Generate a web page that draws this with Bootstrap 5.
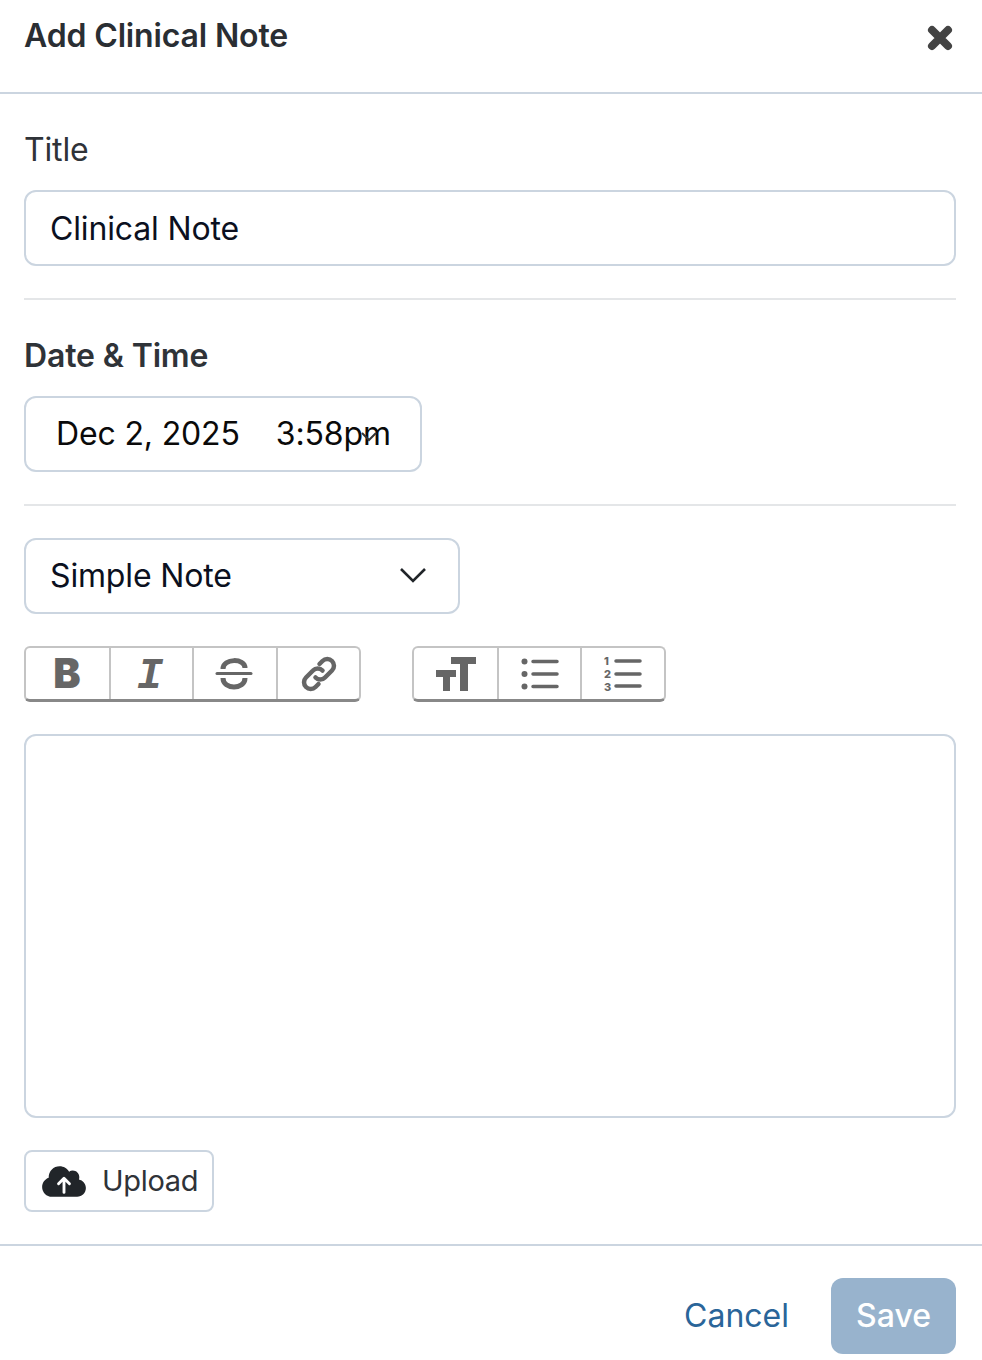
<!DOCTYPE html>
<html lang="en">
<head>
    <meta charset="UTF-8">
    <meta name="viewport" content="width=device-width, initial-scale=1.0">
    <title>Add Clinical Note</title>
    <link href="https://cdn.jsdelivr.net/npm/bootstrap@5.3.0/dist/css/bootstrap.min.css" rel="stylesheet">
    <style>
        body {
            background-color: #fff;
            font-family: 'Inter', 'Liberation Sans', sans-serif;
            font-size: 32px;
            letter-spacing: -0.15px;
            color: #212529;
        }
        .note-header {
            height: 94px;
            padding: 12px 24px 0;
            border-bottom: 2px solid #cbd5e0;
        }
        .note-heading {
            font-size: 32px;
            font-weight: 600;
            line-height: 48px;
            margin: 0;
            color: #2a2e33;
        }
        .note-close {
            background: none;
            border: 0;
            padding: 0;
            width: 32px;
            height: 32px;
            margin-top: 10px;
            margin-right: 2px;
            line-height: 0;
        }
        .note-body {
            padding: 32px 26px 32px 24px;
        }
        .note-label {
            display: block;
            line-height: 48px;
            margin-bottom: 16px;
            color: #2f3338;
        }
        .note-label-strong {
            font-weight: 600;
        }
        .note-field.form-control,
        .note-field.form-select {
            height: 76px;
            font-size: 32px;
            letter-spacing: -0.15px;
            line-height: 44px;
            padding: 14px 24px;
            border: 2px solid #cbd5e0;
            border-radius: 12px;
            color: #0b1020;
            box-shadow: none;
        }
        .note-rule {
            margin: 32px 0;
            border: 0;
            border-top: 2px solid #e4e6e8;
            opacity: 1;
        }
        .note-date {
            position: relative;
            width: 398px;
            white-space: nowrap;
            padding-left: 30px !important;
            color: #0a0a0a !important;
        }
        .note-date-gap {
            margin-left: 36px;
        }
        .note-date-caret {
            position: absolute;
            right: 42px;
            top: 33px;
        }
        .note-select.form-select {
            width: 436px;
            background-image: none;
        }
        .note-select-wrap {
            position: relative;
            width: 436px;
            margin-bottom: 32px;
        }
        .note-select-caret {
            position: absolute;
            right: 33px;
            top: 29px;
            pointer-events: none;
        }
        .note-toolbar {
            gap: 51px;
            margin-bottom: 32px;
        }
        .note-tools {
            display: flex;
            height: 56px;
            border: 2px solid #c4c4c4;
            border-bottom: 3px solid #888;
            border-radius: 6px;
        }
        .note-tool {
            background: transparent;
            border: 0;
            border-right: 2px solid #c4c4c4;
            padding: 0;
            display: flex;
            align-items: center;
            justify-content: center;
            height: 51px;
        }
        .note-tool:last-child {
            border-right: 0;
        }
        .note-tool-b { width: 85px; }
        .note-tool-i { width: 83px; }
        .note-tool-s { width: 84px; }
        .note-tool-n { width: 82px; }
        .note-tool-l { width: 81px; }
        .note-tools svg {
            overflow: visible;
            flex-shrink: 0;
        }
        .note-tools svg text {
            fill: #666;
        }
        .note-editor {
            height: 384px;
            border: 2px solid #cbd5e0;
            border-radius: 12px;
            margin-bottom: 32px;
        }
        .note-upload {
            height: 62px;
            width: 190px;
            border: 2px solid #cbd5e0;
            border-radius: 8px;
            background: #fff;
            font-size: 29px;
            letter-spacing: -0.3px;
            color: #2f3338;
            padding: 0 16px;
            gap: 16px;
        }
        .note-upload svg {
            flex-shrink: 0;
        }
        .note-footer {
            border-top: 2px solid #cbd5e0;
            padding: 32px 26px 0 24px;
            gap: 42px;
        }
        .note-cancel {
            color: #2a6599;
            font-size: 32px;
            letter-spacing: 0;
            text-decoration: none;
        }
        .note-save {
            width: 125px;
            height: 76px;
            font-size: 32px;
            font-weight: 500;
            color: #fff;
            background: #98b3cd;
            border: 0;
            border-radius: 12px;
        }
    </style>
</head>
<body>

<div class="note-header d-flex justify-content-between align-items-start">
    <h1 class="note-heading">Add Clinical Note</h1>
    <button type="button" class="note-close" aria-label="Close">
        <svg width="32" height="32" viewBox="0 0 32 32"><path d="M8 8l16 16M24 8L8 24" stroke="#444" stroke-width="8" stroke-linecap="round" fill="none"/></svg>
    </button>
</div>

<div class="note-body">
    <label class="note-label" for="note-title">Title</label>
    <input id="note-title" class="form-control note-field" type="text" value="Clinical Note">

    <hr class="note-rule">

    <span class="note-label note-label-strong">Date &amp; Time</span>
    <div class="form-control note-field note-date">
        <span>Dec 2, 2025</span><span class="note-date-gap">3:58pm</span>
        <svg class="note-date-caret" width="18" height="12" viewBox="0 0 18 12"><path d="M2 2l7 7 7-7" stroke="#333" stroke-width="2" fill="none"/></svg>
    </div>

    <hr class="note-rule">

    <div class="note-select-wrap">
        <select class="form-select note-field note-select">
            <option>Simple Note</option>
        </select>
        <svg class="note-select-caret" width="28" height="18" viewBox="0 0 28 18"><path d="M2 2l12 12L26 2" stroke="#212529" stroke-width="2.6" fill="none"/></svg>
    </div>

    <div class="note-toolbar d-flex">
        <div class="note-tools">
            <button type="button" class="note-tool note-tool-b" aria-label="Bold">
                <svg width="40" height="40" viewBox="0 0 40 40"><text x="19" y="34" text-anchor="middle" font-family="Inter" font-weight="900" font-size="41">B</text></svg>
            </button>
            <button type="button" class="note-tool note-tool-i" aria-label="Italic">
                <svg width="40" height="40" viewBox="0 0 40 40"><text x="18" y="34" text-anchor="middle" font-family="Liberation Mono" font-style="italic" font-weight="700" font-size="44">I</text></svg>
            </button>
            <button type="button" class="note-tool note-tool-s" aria-label="Strikethrough">
                <svg width="36" height="32" viewBox="0 0 36 32" style="margin-right: 3px"><g fill="none" stroke="#666" stroke-width="5"><path d="M7 11C7 0 29 0 29 10"/><path d="M7 20C7 32 29 32 29 20"/></g><path d="M1 15.500h34" stroke="#666" stroke-width="3" stroke-linecap="round"/></svg>
            </button>
            <button type="button" class="note-tool note-tool-l" aria-label="Link">
                <svg width="40" height="40" viewBox="0 0 40 40"><g fill="none" stroke="#666" stroke-width="4.500" stroke-linecap="round"><path d="M16.500 23.500a6.500 6.500 0 0 0 9.500 0l7-7a6.700 6.700 0 0 0-9.500-9.500l-3 3"/><path d="M23.500 16.500a6.500 6.500 0 0 0-9.500 0l-7 7a6.700 6.700 0 0 0 9.500 9.500l3-3"/></g></svg>
            </button>
        </div>
        <div class="note-tools">
            <button type="button" class="note-tool note-tool-b" aria-label="Heading">
                <svg width="40" height="34" viewBox="0 0 40 34" fill="#666"><path d="M15 0h25v7H32v27h-8V7h-9z"/><path d="M0 13h20v7h-6v14H7V20H0z"/></svg>
            </button>
            <button type="button" class="note-tool note-tool-i" aria-label="Bullets">
                <svg width="38" height="32" viewBox="0 0 38 32"><g fill="#666"><circle cx="3.500" cy="3.500" r="3"/><circle cx="3.500" cy="16" r="3"/><circle cx="3.500" cy="28.500" r="3"/></g><path d="M12 3.500h24M12 16h24M12 28.500h24" stroke="#666" stroke-width="3.500" stroke-linecap="round"/></svg>
            </button>
            <button type="button" class="note-tool note-tool-n" aria-label="Numbers">
                <svg width="38" height="36" viewBox="0 0 38 36"><g font-family="Inter" font-weight="800" font-size="11"><text x="0" y="9">1</text><text x="0" y="22">2</text><text x="0" y="35">3</text></g><path d="M12 5h24M12 18h24M12 30h24" stroke="#666" stroke-width="3.500" stroke-linecap="round"/></svg>
            </button>
        </div>
    </div>

    <div class="note-editor"></div>

    <button type="button" class="note-upload d-flex align-items-center">
        <svg width="44" height="35" viewBox="0 0 640 512"><path fill="#212529" d="M537.6 226.6c4.1-10.700 6.400-22.400 6.400-34.600 0-53-43-96-96-96-19.700 0-38.100 6-53.300 16.200C367 64.200 315.300 32 256 32c-88.400 0-160 71.600-160 160 0 2.700.1 5.400.2 8.100C40.200 219.800 0 273.200 0 336c0 79.500 64.500 144 144 144h368c70.700 0 128-57.300 128-128 0-61.900-44-113.600-102.400-125.400z"/><path d="M320 416V210M240 290l80-80 80 80" stroke="#fff" stroke-width="42" stroke-linecap="round" stroke-linejoin="round" fill="none"/></svg>
        <span>Upload</span>
    </button>
</div>

<div class="note-footer d-flex justify-content-end align-items-center">
    <a href="#" class="note-cancel">Cancel</a>
    <button type="button" class="note-save">Save</button>
</div>

<script src="https://cdn.jsdelivr.net/npm/bootstrap@5.3.0/dist/js/bootstrap.bundle.min.js"></script>
</body>
</html>
